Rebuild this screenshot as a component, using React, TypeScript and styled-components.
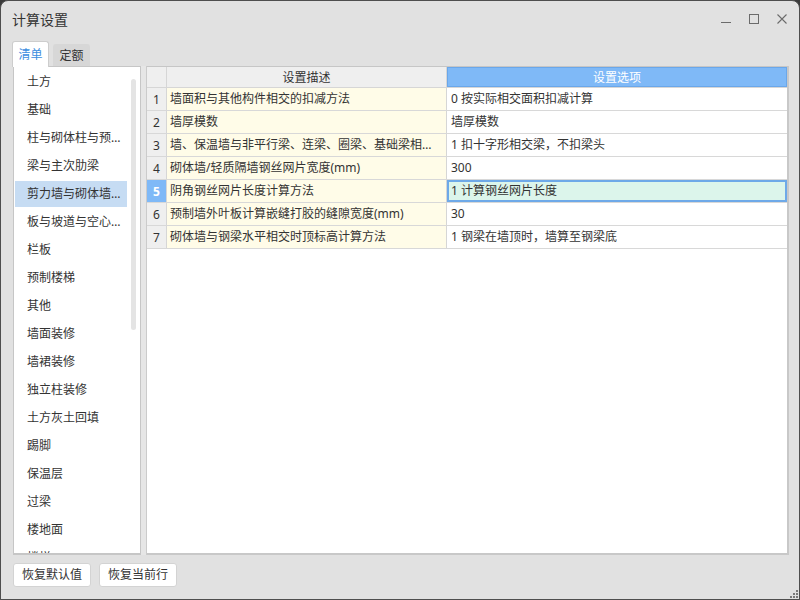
import React from 'react';
import styled, {createGlobalStyle} from "styled-components";

type Setting = {
    desc: string,
    option: string
}

const categories = [
    '土方', '基础', '柱与砌体柱与预制柱', '梁与主次肋梁', '剪力墙与砌体墙与预制墙',
    '板与坡道与空心楼盖板', '栏板', '预制楼梯', '其他', '墙面装修', '墙裙装修', '独立柱装修',
    '土方灰土回填', '踢脚', '保温层', '过梁', '楼地面', '楼梯', '天棚', '吊顶', '墙面',
    '后浇带', '挑檐', '台阶', '散水', '坡道', '压顶', '栏杆扶手', '屋面', '防水层',
    '砌体加筋', '建筑面积'
];

const settings: Setting[] = [
    {desc: '墙面积与其他构件相交的扣减方法', option: '0 按实际相交面积扣减计算'},
    {desc: '墙厚模数', option: '墙厚模数'},
    {desc: '墙、保温墙与非平行梁、连梁、圈梁、基础梁相交的扣减方法', option: '1 扣十字形相交梁，不扣梁头'},
    {desc: '砌体墙/轻质隔墙钢丝网片宽度(mm)', option: '300'},
    {desc: '阴角钢丝网片长度计算方法', option: '1 计算钢丝网片长度'},
    {desc: '预制墙外叶板计算嵌缝打胶的缝隙宽度(mm)', option: '30'},
    {desc: '砌体墙与钢梁水平相交时顶标高计算方法', option: '1 钢梁在墙顶时，墙算至钢梁底'},
];

const SELECTED_CATEGORY = 4;
const ACTIVE_ROW = 4;

export default function App() {
    return (
        <>
            <GlobalStyle/>
            <Window>
                <TitleBar>
                    <Title>计算设置</Title>
                    <Controls>
                        <ControlButton>
                            <svg width="10" height="10" viewBox="0 0 10 10">
                                <line x1="0" y1="8.5" x2="10" y2="8.5" stroke="#6b6b6b" strokeWidth="1"/>
                            </svg>
                        </ControlButton>
                        <ControlButton>
                            <svg width="10" height="10" viewBox="0 0 10 10">
                                <rect x="0.5" y="0.5" width="9" height="9" fill="none" stroke="#6b6b6b" strokeWidth="1"/>
                            </svg>
                        </ControlButton>
                        <ControlButton>
                            <svg width="10" height="10" viewBox="0 0 10 10">
                                <path d="M0.5 0.5 L9.5 9.5 M9.5 0.5 L0.5 9.5" stroke="#6b6b6b" strokeWidth="1.1"/>
                            </svg>
                        </ControlButton>
                    </Controls>
                </TitleBar>

                <TabBar>
                    <Tab $active>清单</Tab>
                    <Tab>定额</Tab>
                </TabBar>

                <Body>
                    <SidePanel>
                        <CategoryList>
                            {categories.map((c, i) => (
                                <CategoryItem key={c} $selected={i === SELECTED_CATEGORY}>{c}</CategoryItem>
                            ))}
                        </CategoryList>
                        <ScrollTrack>
                            <ScrollThumb/>
                        </ScrollTrack>
                    </SidePanel>
                    <Splitter/>
                    <GridPanel>
                        <HeaderRow>
                            <HeadCell/>
                            <HeadCell>设置描述</HeadCell>
                            <HeadCell $primary>设置选项</HeadCell>
                        </HeaderRow>
                        {settings.map((s, i) => (
                            <Row key={i}>
                                <NumCell $active={i === ACTIVE_ROW}>{i + 1}</NumCell>
                                <DescCell>{s.desc}</DescCell>
                                <OptionCell $active={i === ACTIVE_ROW}>{s.option}</OptionCell>
                            </Row>
                        ))}
                    </GridPanel>
                </Body>

                <Footer>
                    <ActionButton>恢复默认值</ActionButton>
                    <ActionButton>恢复当前行</ActionButton>
                    <Grip width="9" height="9" viewBox="0 0 9 9">
                        <rect x="7" y="1" width="2" height="2" fill="#7a7a7a"/>
                        <rect x="4" y="4" width="2" height="2" fill="#7a7a7a"/>
                        <rect x="7" y="4" width="2" height="2" fill="#7a7a7a"/>
                        <rect x="1" y="7" width="2" height="2" fill="#7a7a7a"/>
                        <rect x="4" y="7" width="2" height="2" fill="#7a7a7a"/>
                        <rect x="7" y="7" width="2" height="2" fill="#7a7a7a"/>
                    </Grip>
                </Footer>
            </Window>
        </>
    );
}

const GlobalStyle = createGlobalStyle`
    html, body {
        margin: 0;
        padding: 0;
        background: #3a3a3a;
    }
    body {
        font-family: "Noto Sans", "Noto Sans CJK SC", sans-serif;
        font-size: 12px;
        color: #333;
    }
    * {
        box-sizing: border-box;
    }
`

const Window = styled.div`
    width: 800px;
    height: 600px;
    background: #e1e1e1;
    border: 1px solid #4e4e4e;
    border-radius: 8px 8px 0 0;
    display: flex;
    flex-direction: column;
    overflow: hidden;
`

const TitleBar = styled.div`
    height: 40px;
    display: flex;
    align-items: center;
    justify-content: space-between;
    padding-left: 11px;
    flex-shrink: 0;
`

const Title = styled.div`
    font-size: 14px;
    line-height: 18px;
    color: #333;
    padding-bottom: 3px;
`

const Controls = styled.div`
    display: flex;
    margin-right: 3px;
    align-self: stretch;
`

const ControlButton = styled.div`
    width: 28px;
    display: flex;
    align-items: flex-start;
    justify-content: center;
    padding-top: 13px;
`

const TabBar = styled.div`
    height: 25px;
    display: flex;
    align-items: flex-end;
    gap: 4px;
    padding-left: 11px;
    flex-shrink: 0;
`

const Tab = styled.div<{ $active?: boolean }>`
    position: relative;
    z-index: 1;
    width: 37px;
    height: ${p => p.$active ? '26px' : '22px'};
    margin-bottom: ${p => p.$active ? '-1px' : '0'};
    display: flex;
    align-items: center;
    justify-content: center;
    padding-bottom: ${p => p.$active ? '1px' : '0'};
    background: ${p => p.$active ? '#ffffff' : '#d7d7d7'};
    border: ${p => p.$active ? '1px solid #cdcdcd' : 'none'};
    border-bottom: none;
    border-radius: 3px 3px 0 0;
    color: ${p => p.$active ? '#3b8de0' : '#333'};
`

const Body = styled.div`
    height: 489px;
    display: flex;
    padding: 0 10px 0 12px;
    flex-shrink: 0;
`

const SidePanel = styled.div`
    width: 128px;
    display: flex;
    background: #fff;
    border: 1px solid #c6c6c6;
    border-bottom-width: 2px;
    overflow: hidden;
`

const CategoryList = styled.div`
    flex: 1;
    min-width: 0;
    display: flex;
    flex-direction: column;
    padding-top: 1px;
    overflow: hidden;
`

const CategoryItem = styled.div<{ $selected?: boolean }>`
    flex-shrink: 0;
    height: 26px;
    margin: 1px 4px 1px 1px;
    padding: 0 4px 0 12px;
    line-height: 26px;
    background: ${p => p.$selected ? '#c6dcf3' : 'transparent'};
    white-space: nowrap;
    overflow: hidden;
    text-overflow: ellipsis;
`

const ScrollTrack = styled.div`
    width: 9px;
    flex-shrink: 0;
    padding: 12px 4px 0 0;
`

const ScrollThumb = styled.div`
    height: 251px;
    background: #e4e4e4;
    border-radius: 3px;
`

const Splitter = styled.div`
    width: 5px;
    background: #e6e6e6;
    border-right: 1px solid #cbcbcb;
    box-sizing: content-box;
`

const GridPanel = styled.div`
    flex: 1;
    background: #fff;
    border-top: 1px solid #c6c6c6;
    border-right: 2px solid #c8c8c8;
    border-bottom: 2px solid #c8c8c8;
`

const HeaderRow = styled.div`
    display: grid;
    grid-template-columns: 20px 280px 1fr;
    height: 21px;
    border-bottom: 1px solid #d6d6d6;
`

const HeadCell = styled.div<{ $primary?: boolean }>`
    display: flex;
    align-items: center;
    justify-content: center;
    background: ${p => p.$primary ? '#7fb9f7' : '#efefef'};
    color: ${p => p.$primary ? '#fff' : '#333'};
    border-right: ${p => p.$primary ? 'none' : '1px solid #d6d6d6'};
    box-shadow: ${p => p.$primary ? 'inset 0 0 0 1px #6aa7ea' : 'none'};
`

const Row = styled.div`
    display: grid;
    grid-template-columns: 20px 280px 1fr;
    height: 23px;
    border-bottom: 1px solid #d8d8d8;
`

const NumCell = styled.div<{ $active?: boolean }>`
    display: flex;
    align-items: center;
    justify-content: center;
    background: ${p => p.$active ? '#7fb9f7' : '#efefef'};
    color: ${p => p.$active ? '#fff' : '#333'};
    font-weight: ${p => p.$active ? 700 : 400};
    border-right: 1px solid #d6d6d6;
`

const DescCell = styled.div`
    padding: 0 5px 0 3px;
    line-height: 22px;
    background: #fffce8;
    border-right: 1px solid #d6d6d6;
    white-space: nowrap;
    overflow: hidden;
    text-overflow: ellipsis;
`

const OptionCell = styled.div<{ $active?: boolean }>`
    padding: 0 4px;
    line-height: 22px;
    background: ${p => p.$active ? '#dcf5eb' : '#fff'};
    box-shadow: ${p => p.$active ? 'inset 0 0 0 2px #6ea9e8' : 'none'};
    white-space: nowrap;
`

const Footer = styled.div`
    flex: 1;
    display: flex;
    align-items: flex-start;
    gap: 8px;
    padding: 8px 1px 1px 12px;
`

const ActionButton = styled.button`
    width: 78px;
    height: 24px;
    padding: 0;
    font-family: inherit;
    font-size: 12px;
    line-height: 22px;
    color: #333;
    background: #fff;
    border: 1px solid #d3d3d3;
    border-radius: 3px;
`

const Grip = styled.svg`
    margin-left: auto;
    align-self: flex-end;
`
